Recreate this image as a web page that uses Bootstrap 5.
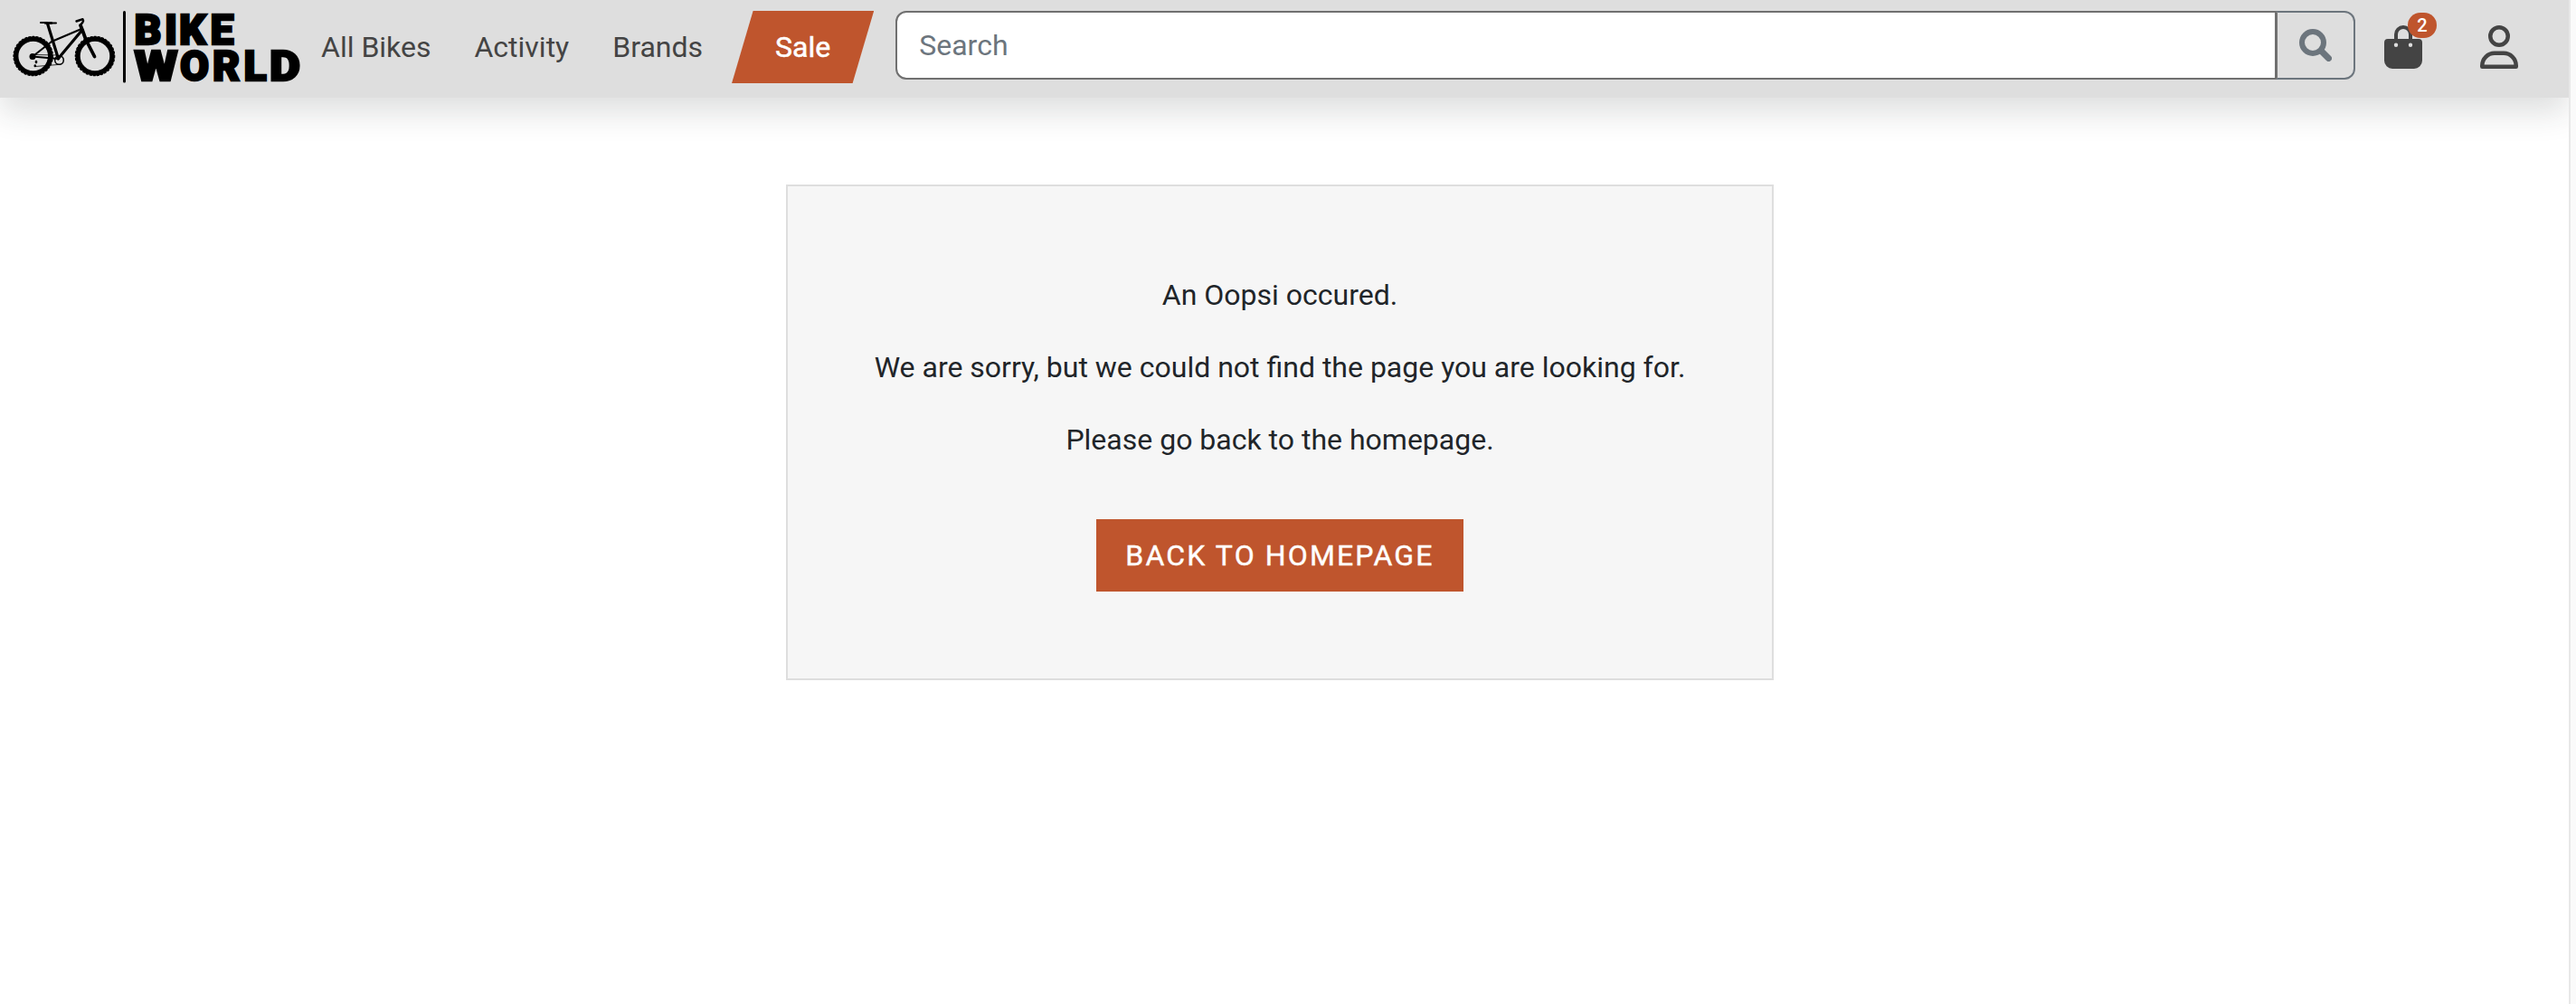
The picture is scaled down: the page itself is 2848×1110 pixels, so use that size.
<!DOCTYPE html>
<html lang="en">
<head>
<meta charset="utf-8">
<meta name="viewport" content="width=device-width, initial-scale=1">
<title>Bike World</title>
<link href="https://cdn.jsdelivr.net/npm/bootstrap@5.3.0/dist/css/bootstrap.min.css" rel="stylesheet">
<style>
:root { font-size: 32px; --brand: #bf552d; --ink: #444; }
body { font-family: Roboto, "Liberation Sans", sans-serif; background: #fafafa; overflow: hidden; }
.page-frame { height: 1110px; width: 2842px; background: #fff; border-right: 2px solid #e8e8e8; overflow: hidden; }
.site-header { background: #dedede; height: 108px; padding: 12px 56px 0 14px; }
.site-logo { width: 317px; height: 80px; display: block; overflow: visible; }
.site-header .nav-link { color: var(--ink); padding: 16px 24px; }
.site-header .sale-link { color: #fff; background: var(--brand); -webkit-text-stroke: .5px #fff; padding: 16px 48px; margin-left: 8px; clip-path: polygon(15% 0, 100% 0, 85% 100%, 0 100%); }
.search-box { margin-left: 24px; height: 76px; }
.search-box .form-control { border: 2px solid #707070; border-radius: 12px 0 0 12px; padding: 12px 24px; }
.search-box .form-control::placeholder { color: #6c757d; }
.search-box .btn { width: 88px; border: 2px solid #6c757d; border-left-color: #707070; border-radius: 0 12px 12px 0; padding: 0; color: #6c757d; }
.icon-action { width: 42px; height: 48px; color: var(--ink); margin-top: 16px; }
.icon-action svg { display: block; }
.bag-link { margin-left: 32px; }
.user-link { margin-left: 64px; }
.bag-count { left: 26px; top: -14px; width: 32px; height: 28px; padding: 0; line-height: 28px; font-size: 20px; font-weight: 500; background: var(--brand); border-radius: 14px; }
.page-main { padding: 96px 10px 0 0; }
.notice { background: #f6f6f6; border: 2px solid #dedede; padding: 96px; color: #212529; }
.notice p { margin-bottom: 32px; }
.btn-home { background: var(--brand); color: #fff; border: 0; border-radius: 0; padding: 16px 32px; letter-spacing: 2.13px; -webkit-text-stroke: .4px #fff; margin-top: 32px; }
</style>
</head>
<body>
<div class="page-frame">
  <header class="site-header d-flex align-items-start shadow">
    <a href="#" class="flex-shrink-0" aria-label="Bike World">
      <svg class="site-logo" viewBox="14 12 317 80">
        <g fill="none" stroke="#000" stroke-linecap="round" stroke-linejoin="round">
          <circle cx="36.7" cy="62" r="19" stroke-width="5.400"/>
          <circle cx="105" cy="62" r="19" stroke-width="5.400"/>
          <circle cx="36.7" cy="62" r="21.700" stroke-width="1.200" stroke-dasharray="2 2.200"/>
          <circle cx="105" cy="62" r="21.700" stroke-width="1.200" stroke-dasharray="2 2.200"/>
          <path d="M45 25H51.500M55 25.500H62" stroke-width="2"/>
          <path d="M50 25.500H57" stroke-width="2.400"/>
          <path d="M52.500 26L64.500 65" stroke-width="3.200"/>
          <path d="M57 46L90 32" stroke-width="2.200"/>
          <path d="M65 64L91 33" stroke-width="3.200"/>
          <path d="M36 62.500L57 46M36 62.500L64 65" stroke-width="2"/>
          <path d="M89 28L91 33L95 44L104.500 62.500" stroke-width="3.800"/>
          <path d="M84.500 23.500L91.500 21.200Q92.500 22.500 91.500 24.500L88.800 28" stroke-width="2.400"/>
          <circle cx="65.500" cy="66.500" r="4.800" stroke-width="1.500"/>
          <path d="M38 60.500L64 61M39 73.500L64 71.500" stroke-width=".8"/>
          <path d="M40 68V69M38.800 72.500V73" stroke-width="2.600"/>
        </g>
        <circle cx="36" cy="62.500" r="3.500"/>
        <path d="M137.500 13.500V90" stroke="#000" stroke-width="3" stroke-linecap="round"/>
        <g font-family="Roboto, sans-serif" font-weight="900" stroke="#000" stroke-width="2.400" font-size="46.500">
          <text x="148.500 182 198 232.500" y="48.500">BIKE</text>
          <text y="88.500"><tspan x="148.500" textLength="48" lengthAdjust="spacingAndGlyphs">W</tspan><tspan x="199 235 269.500">ORL</tspan><tspan x="298" textLength="34" lengthAdjust="spacingAndGlyphs">D</tspan></text>
        </g>
      </svg>
    </a>
    <nav class="nav flex-nowrap flex-shrink-0">
      <a class="nav-link" href="#">All Bikes</a>
      <a class="nav-link" href="#">Activity</a>
      <a class="nav-link" href="#">Brands</a>
      <a class="nav-link sale-link" href="#">Sale</a>
    </nav>
    <form class="input-group search-box flex-nowrap flex-grow-1 w-auto">
      <input class="form-control" type="search" placeholder="Search" aria-label="Search">
      <button class="btn d-flex align-items-center justify-content-center" type="button" aria-label="Search">
        <svg width="36" height="36" viewBox="0 0 36 36" fill="none" stroke="currentColor"><circle cx="15" cy="15" r="12" stroke-width="6"/><path d="M24.500 24.500L32.500 32.500" stroke-width="7" stroke-linecap="round"/></svg>
      </button>
    </form>
    <a href="#" class="icon-action bag-link position-relative flex-shrink-0" aria-label="Cart">
      <svg width="42" height="48" viewBox="0 0 42 48"><path d="M13 17V10a8 8 0 0 1 16 0V17" fill="none" stroke="currentColor" stroke-width="4"/><path fill="currentColor" fill-rule="evenodd" d="M4 15H38a4 4 0 0 1 4 4V39a9 9 0 0 1-9 9H9a9 9 0 0 1-9-9V19a4 4 0 0 1 4-4zM13 19.500a2.200 2.200 0 1 0 0 4.400a2.200 2.200 0 1 0 0-4.400zM29 19.500a2.200 2.200 0 1 0 0 4.400a2.200 2.200 0 1 0 0-4.400z"/></svg>
      <span class="badge bag-count position-absolute">2</span>
    </a>
    <a href="#" class="icon-action user-link flex-shrink-0" aria-label="Account">
      <svg width="42" height="48" viewBox="0 0 42 48" fill="none" stroke="currentColor" stroke-width="4.500" stroke-linejoin="round"><circle cx="21" cy="12" r="9.750"/><path d="M2.250 45.750V44.500A13.700 13.700 0 0 1 16 30.800H26A13.700 13.700 0 0 1 39.750 44.500V45.750Z"/></svg>
    </a>
  </header>
  <main class="page-main d-flex justify-content-center">
    <section class="notice text-center">
      <p>An Oopsi occured.</p>
      <p>We are sorry, but we could not find the page you are looking for.</p>
      <p>Please go back to the homepage.</p>
      <a href="#" class="btn btn-home text-uppercase">Back to homepage</a>
    </section>
  </main>
</div>
<script src="https://cdn.jsdelivr.net/npm/bootstrap@5.3.0/dist/js/bootstrap.bundle.min.js"></script>
</body>
</html>
